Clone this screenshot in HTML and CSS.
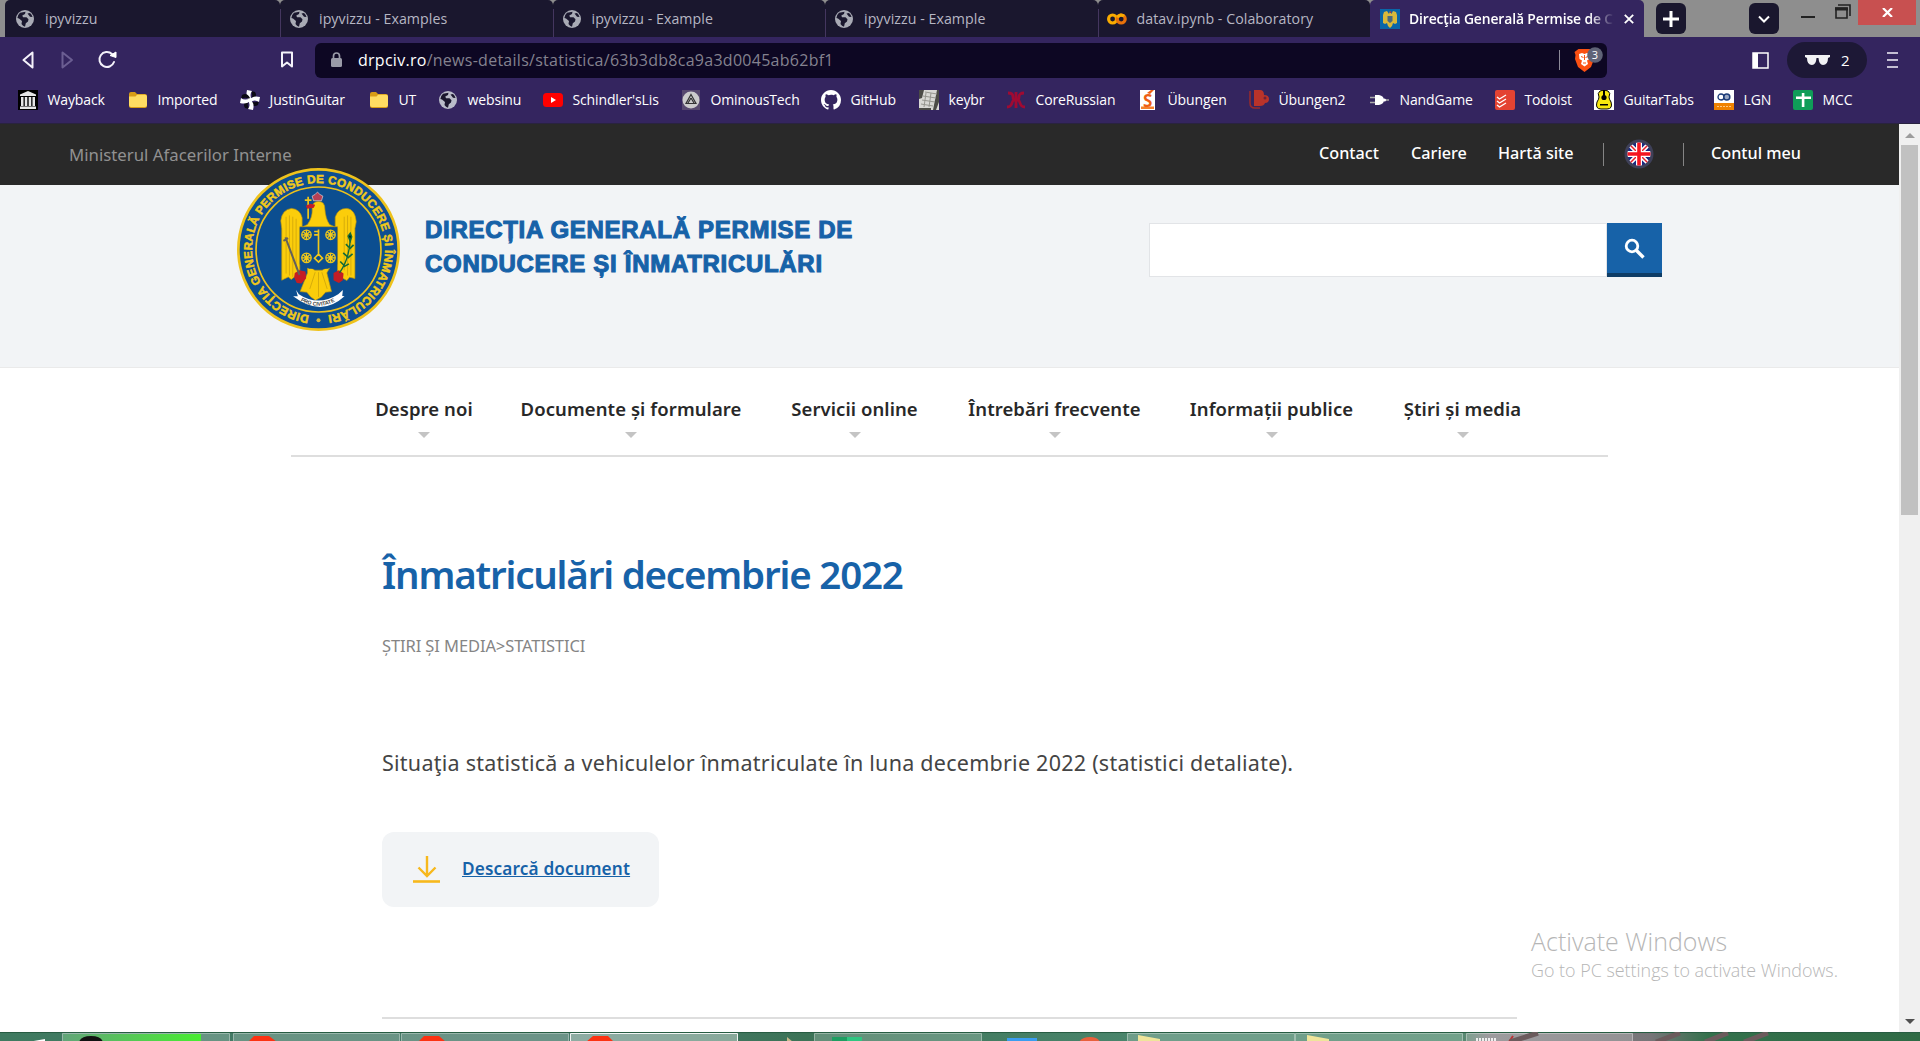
FILE: index.html
```html
<!DOCTYPE html>
<html lang="en">
<head>
<meta charset="utf-8">
<title>Direcţia Generală Permise de Conducere</title>
<link rel="stylesheet" href="styles.css">
</head>
<body>
<svg class="defs" width="0" height="0">
  <symbol id="globe" viewBox="0 0 20 20"><circle cx="10" cy="10" r="9" fill="currentColor"/><path class="land" d="M5 3.8 10.5 2.7 10 5 7.3 6.6 8 8.3 11.5 8.3 13.5 10.2 13 12.6 10.8 14.2 10 17.8A8 8 0 0 1 6.5 15L7 12 4 9.4 2.4 9A8 8 0 0 1 5 3.8ZM12.5 4.6 15 4A8 8 0 0 1 17.5 8L15 7.8Z"/></symbol>
  <symbol id="folder" viewBox="0 0 20 20"><path d="M1 4a2 2 0 0 1 2-2h4l2 2h8a2 2 0 0 1 2 2v10a2 2 0 0 1-2 2H3a2 2 0 0 1-2-2z" fill="#d99c16"/><path d="M1 6.5h6.5l1.6-1.7H17a2 2 0 0 1 2 2V15a2 2 0 0 1-2 2H3a2 2 0 0 1-2-2z" fill="#ffdc62"/></symbol>
</svg>

<header class="browser">
  <div class="tabs">
    <div class="tab"><svg class="fav"><use href="#globe"/></svg><span>ipyvizzu</span></div>
    <div class="tab"><svg class="fav"><use href="#globe"/></svg><span>ipyvizzu - Examples</span></div>
    <div class="tab"><svg class="fav"><use href="#globe"/></svg><span>ipyvizzu - Example</span></div>
    <div class="tab"><svg class="fav"><use href="#globe"/></svg><span>ipyvizzu - Example</span></div>
    <div class="tab"><svg class="fav" viewBox="0 0 20 20"><g fill="none" stroke-width="3.2"><circle cx="5.6" cy="10" r="4" stroke="#f9ab00"/><circle cx="14.2" cy="10" r="4" stroke="#e8710a"/><path d="M10.5 8.5a4 4 0 0 1 6.5-1.3" stroke="#f9ab00"/></g></svg><span>datav.ipynb - Colaboratory</span></div>
    <div class="tab active"><svg class="fav" viewBox="0 0 20 20"><path d="M0 0h20v20H0z" fill="#0a66a8"/><path d="M4 3 7 2l2 3 1-3 1.5 3L13 2l3 1 1 3v8l-2 1-2-1-1 3-2 2-2-2-1-3-2 1-2-1V6z" fill="#d9b93a"/><path d="M7.5 7h5v5l-2.5 2-2.5-2z" fill="#496a80"/><path d="m9 4 2-2 .5 2z" fill="#b33"/></svg><span>Direcţia Generală Permise de Conducere</span>
      <svg class="tab-close" viewBox="0 0 10 10"><path d="m.8.8 8.4 8.4M9.2.8.8 9.2" stroke="#fff" stroke-width="1.8"/></svg></div>
    <div class="tab-button"><svg width="16" height="16"><path d="M8 0v16M0 8h16" stroke="#fff" stroke-width="3"/></svg></div>
    <div class="tab-button list"><svg width="12" height="8"><path d="m1 1.5 5 5 5-5" fill="none" stroke="#fff" stroke-width="2"/></svg></div>
    <svg class="window-buttons" width="50" height="24"><path d="M0 17h14" stroke="#222" stroke-width="2"/><path d="M37 5h12v11M34 8h12v10H35V8" fill="none" stroke="#222" stroke-width="1.6"/><path d="M34 9h13" stroke="#222" stroke-width="3"/></svg>
    <div class="window-close"><svg width="11" height="9"><path d="m1 0 9 9M10 0 1 9" stroke="#fff" stroke-width="2.2"/></svg></div>
  </div>

  <div class="toolbar">
    <svg class="history" width="100" height="20" fill="none" stroke-linejoin="round"><path d="m11.500 2.500-9 7.500 9 7.500z" stroke="#f4f2fa" stroke-width="2"/><path d="m41.500 2.500 9.500 7.500-9.500 7.500z" stroke="#6b5e92" stroke-width="2"/><path d="M91 4a7.500 7.500 0 1 0 2 8" stroke="#f4f2fa" stroke-width="2" stroke-linecap="round"/><path d="M89 5.500 95 2v5.500z" fill="#fff" stroke="#fff"/></svg>
    <svg class="mark" width="14" height="18"><path d="M2 1.500h10v14l-5-4-5 4z" fill="none" stroke="#f4f2fa" stroke-width="2" stroke-linejoin="round"/></svg>
    <div class="address">
      <svg width="12" height="16"><rect y="6" width="11" height="9" rx="1.500" fill="#9a9ba8"/><path d="M2.500 7V4a3 3 0 0 1 6 0v3" fill="none" stroke="#9a9ba8" stroke-width="1.700"/></svg>
      <span class="url"><b>drpciv.ro</b>/news-details/statistica/63b3db8ca9a3d0045ab62bf1</span>
      <i class="rule"></i>
      <svg class="shield" width="30" height="26" viewBox="0 0 30 26"><path d="m4.500 2-4 3 1 3-.5 4 3 8 6.500 5 6.500-5 3-8-.5-4 1-3-4-3z" fill="#fb5012"/><path d="M5 7 8 6l2.500 1L13 6l3 1-.5 5-2.500 1.500 1 3.500-3.500 2.500L7 17l1-3.500L5.500 12z" fill="#fff"/><path d="m7 9.500 2.500 1M14 9.500l-2.500 1M10.500 8v5M9 16h3" stroke="#fb5012"/><circle cx="21" cy="8" r="7.800" fill="#5f6377"/><text x="21" y="11.800" text-anchor="middle" font-size="11" fill="#fff">3</text></svg>
    </div>
    <svg class="side" width="17" height="17"><path d="M1 1h15v15H1z" fill="none" stroke="#fff" stroke-width="1.500"/><path d="M1 1h5v15H1z" fill="#fff"/></svg>
    <div class="private"><svg width="25" height="11"><path d="M0 0h25v2l-2 1q0 7-5 7-4 0-4.500-7h-2Q11 10 7 10 2 10 2 3L0 2z" fill="#f2f2f5"/></svg><span>2</span></div>
    <svg class="menu" width="12" height="18"><path d="M0 2h11M0 9h11M0 16h11" stroke="#f4f2fa" stroke-width="1.700"/></svg>
  </div>

  <nav class="bookmarks">
    <a><svg viewBox="0 0 20 20"><path d="M0 0h20v20H0z" fill="#000"/><path d="M2 4.500 10 1l8 3.500V6H2zM2 16.500h16V19H2zM3 7h2.500v9H3zM6.800 7h2.500v9H6.800zM10.700 7h2.500v9h-2.500zM14.500 7H17v9h-2.500z" fill="#e6e6e6"/></svg>Wayback</a>
    <a><svg><use href="#folder"/></svg>Imported</a>
    <a><svg viewBox="0 0 20 20"><g id="blade"><path d="M10 10q4-3 1-9l4 1q3 5-3 8z" fill="#0c0a14"/><path d="M10 11Q5 7 7 0l5 1q-3 4 0 9z" fill="#fff"/></g><use href="#blade" transform="rotate(90 10 10)"/><use href="#blade" transform="rotate(180 10 10)"/><use href="#blade" transform="rotate(270 10 10)"/></svg>JustinGuitar</a>
    <a><svg><use href="#folder"/></svg>UT</a>
    <a class="light"><svg><use href="#globe"/></svg>websinu</a>
    <a><svg viewBox="0 0 20 20"><rect y="3" width="20" height="14" rx="3.500" fill="#f00"/><path d="m8 7 5 3-5 3z" fill="#fff"/></svg>Schindler'sLis</a>
    <a><svg viewBox="0 0 20 20"><path d="M1 0h18v20H1z" fill="#57496f"/><circle cx="10" cy="10" r="8.500" fill="#ccc"/><path d="m10 4.500 5 9H5zM10 8l-3 5M10 8l3 5" fill="none" stroke="#333" stroke-width="1.200"/></svg>OminousTech</a>
    <a><svg viewBox="0 0 16 16"><path fill="#fff" d="M8 0C3.580 0 0 3.580 0 8c0 3.540 2.290 6.530 5.470 7.590.4.070.55-.17.55-.38v-1.340c-2.230.48-2.690-1.070-2.690-1.070-.36-.92-.89-1.170-.89-1.170-.73-.5.05-.49.05-.49.81.06 1.230.83 1.230.83.72 1.230 1.880.87 2.340.67.07-.52.28-.87.51-1.070-1.780-.2-3.640-.89-3.640-3.950 0-.87.31-1.590.82-2.150-.08-.2-.36-1.020.08-2.120 0 0 .67-.21 2.200.82A7.700 7.700 0 0 1 8 3.870c.68 0 1.360.09 2 .27 1.530-1.040 2.200-.82 2.200-.82.44 1.100.16 1.920.08 2.120.51.56.82 1.270.82 2.150 0 3.070-1.870 3.750-3.650 3.950.29.25.54.73.54 1.480v2.190c0 .21.15.46.55.38A8 8 0 0 0 16 8c0-4.420-3.580-8-8-8z"/></svg>GitHub</a>
    <a><svg viewBox="0 0 20 20"><path d="M0 0h20v20H0z" fill="#d8d8d4"/><path d="M0 0h5L3 8 0 9zM18 0h2v12l-3 8h-3zM0 18h12v2H0z" fill="#4b4b46"/><path d="m4 6 13 2M3 10l13 2M2 14l12 2M7 3 5 17M12 3l-2 14M6 2l12 2" stroke="#96968f"/></svg>keybr</a>
    <a><svg viewBox="0 0 20 20"><path d="M10 2v16M2 3q5 0 5 4t3 3q3 1 3-3t5-4M1 17q4 0 5-4t4-3q3-1 4 3t5 4" fill="none" stroke="#a00a32" stroke-width="2.800"/></svg>CoreRussian</a>
    <a><svg class="langenscheidt" viewBox="0 0 20 20"><path d="M2 0h15v20H2z" fill="#fff"/><path d="M3 16.500h13V19H3z" fill="#f5802a"/><text x="9.500" y="16.500" text-anchor="middle" font-size="17" font-weight="700" fill="#ee5f12">S</text><path d="m9 3 4-3h3l-4 4z" fill="#ee5f12"/></svg>Übungen</a>
    <a><svg viewBox="0 0 20 20"><path d="M5 0h6q4 0 4 5 5 0 5 4t-4 4q-1 3-5 3H5z" fill="#b9332a"/><circle cx="16" cy="8" r="1.500" fill="#6e2138"/><path d="M1 1v12q0 5 5 5h5" fill="none" stroke="#9c2a2a" stroke-width="1.500"/></svg>Übungen2</a>
    <a><svg viewBox="0 0 20 20"><path d="M0 7.500h6M0 12.500h6M13 10h6" stroke="#aaa" stroke-width="1.300"/><path d="M5 5h4q5 1 5 5t-5 5H5z" fill="#fff"/><circle cx="14.500" cy="10" r="1.500" fill="#fff"/></svg>NandGame</a>
    <a><svg viewBox="0 0 20 20"><rect width="20" height="20" rx="2" fill="#e44332"/><path d="m2 7 2.500 2L11 5M2 11l2.500 2L11 9M2 15l2.500 2L11 13" fill="none" stroke="#fff" stroke-width="1.400"/></svg>Todoist</a>
    <a><svg viewBox="0 0 20 20"><path d="M0 0h20v20H0z" fill="#fff"/><path d="M6 1q4-2 8 0 3 2 1 6 0 2 2 5 2 7-4 7H7q-6 0-4-7 2-3 2-5Q3 3 6 1z" fill="#f8e70e" stroke="#000"/><circle cx="10" cy="7.500" r="2.600"/><path d="M9 0h2v7H9zM6 14h8v1.500H6z"/></svg>GuitarTabs</a>
    <a><svg viewBox="0 0 20 20"><path d="M0 0h20v13H0z" fill="#fff"/><path d="M0 13h20v7H0z" fill="#f08200"/><circle cx="7" cy="7" r="3" fill="none" stroke="#1c3c78" stroke-width="1.300"/><circle cx="12.800" cy="7" r="3" fill="#9aa9c4" stroke="#1c3c78" stroke-width="1.500"/><path d="M3 16.500h14" stroke="#ffc782" stroke-dasharray="2 1"/></svg>LGN</a>
    <a><svg viewBox="0 0 20 20"><rect width="20" height="20" rx="2" fill="#0f9d58"/><path d="M8.800 3h2.600v3.500H18v2.600h-6.600V17H8.800V9.100H3V6.500h5.800z" fill="#fff"/></svg>MCC</a>
  </nav>
</header>

<div class="view">
  <main class="page">
    <div class="topbar">
      <span class="ministry">Ministerul Afacerilor Interne</span>
      <nav class="top-links"><a>Contact</a><a>Cariere</a><a>Hartă site</a>
        <span class="flag"><svg width="30" height="30" viewBox="0 0 30 30"><circle cx="15" cy="15" r="14.500" fill="#3e4058"/><clipPath id="round"><circle cx="15" cy="15" r="11.500"/></clipPath><g clip-path="url(#round)"><path d="M3 3h24v24H3z" fill="#1b2a80"/><path d="m3 3 24 24M27 3 3 27" stroke="#fff" stroke-width="4.500"/><path d="m3 3 24 24M27 3 3 27" stroke="#e8202c" stroke-width="1.500"/><path d="M15 3v24M3 15h24" stroke="#fff" stroke-width="6"/><path d="M15 3v24M3 15h24" stroke="#f51420" stroke-width="3.600"/></g></svg></span>
        <a>Contul meu</a></nav>
    </div>

    <div class="masthead">
      <svg class="emblem" viewBox="51 38 488 488">
        <circle cx="295" cy="282" r="240" fill="#0d4f91" stroke="#eec21c" stroke-width="8"/>
        <circle cx="295" cy="282" r="187" fill="#0c4e90" stroke="#eec21c" stroke-width="5"/>
        <path id="ring" d="M295 481a199 199 0 0 1 0-398 199 199 0 0 1 0 398" fill="none"/>
        <text class="ring-text" font-size="35"><textPath href="#ring" startOffset="28" textLength="1194">DIRECȚIA GENERALĂ PERMISE DE CONDUCERE ȘI ÎNMATRICULĂRI</textPath></text>
        <circle cx="295" cy="494" r="6" fill="#d9b93a"/>
        <g fill="#fbcd0b" stroke="#b8930f" stroke-width="2">
          <path d="M276 160q0-22 19-22 19 0 19 22 2 30 14 47l17 8V185q8-26 34-26 26 2 29 40l-4 20v150l-16-4-8 10-14-8-6 8-8-26V214H239v132l-8 26-8-8-10 8-8-8-20 10V220l-3-24q4-34 32-37 26 2 32 28v28l16-8q16-22 14-47z"/>
          <path d="m262 330 22 14 22 0 26-14-12 22 14 56-18 2-12 14-18 10-14-10-12-14-20-2 22-56z"/>
        </g>
        <path d="M239 216h112v110l-28 14h-56l-28-14z" fill="#0c4e90"/>
        <path d="M208 180v180M198 184v170M218 184v180M228 190v150M372 184v160M382 180v180M392 184v176M285 350l-16 50M295 350v74M305 350l16 50" stroke="#c49c0c" stroke-width="2"/>
        <g fill="none" stroke="#f1c81a" stroke-width="4"><g id="wheel"><circle cx="259" cy="238" r="14"/><path d="M245 238h28M259 224v28M249 228l20 20M269 228l-20 20"/></g><use href="#wheel" x="72"/><use href="#wheel" y="69"/><use href="#wheel" x="72" y="69"/><path d="M295 222v74M282 228h13M282 238h13M295 296l12 12-12 12-12-12z" stroke-width="5"/><path d="M264 124v66M254 134h20" stroke-width="5"/></g>
        <path d="m280 136-4-14 9-5 7-7 7 7 9 5-4 14z" fill="#b84054" stroke="#ddd" stroke-width="2"/>
        <path d="m257 151 14-6 14 3-4 9-20 3zM224 352l14-8 18 4 2 20-14 16-14-2-8-16zM340 352l16-8 14 10-2 20-12 8-16-8z" fill="#c41d25"/>
        <path d="m196 246 42 112M190 256l14-8" stroke="#63615c" stroke-width="6"/>
        <path d="M358 352q34-50 32-114" fill="none" stroke="#126b3a" stroke-width="4"/><path d="m390 256-6-14 6-8 4 10zM387 276l-10-10M388 280l12-12M382 304l-13-12M382 308l15-13M372 330l-12-12M370 334l16-9" stroke="#126b3a" stroke-width="5"/>
        <path d="m228 403 8 13q58 38 118 0l14-13-2 18 7 1q-70 64-154 0l14 0z" fill="#fff"/>
        <path id="motto" d="M241 435q54 32 112-2" fill="none"/><text font-size="16" font-weight="700" fill="#444"><textPath href="#motto" textLength="108">PRO CIVITATE</textPath></text>
      </svg>
      <h2 class="name">DIRECȚIA GENERALĂ PERMISE DE<br>CONDUCERE ȘI ÎNMATRICULĂRI</h2>
      <div class="search"><div class="field"></div><div class="go"><svg width="22" height="22"><circle cx="8" cy="8" r="5.800" fill="none" stroke="#fff" stroke-width="2.800"/><path d="m12.500 12.500 7 7" stroke="#fff" stroke-width="3.400"/></svg></div></div>
    </div>

    <nav class="main-nav"><a>Despre noi</a><a>Documente și formulare</a><a>Servicii online</a><a>Întrebări frecvente</a><a>Informații publice</a><a>Știri și media</a></nav>

    <article class="content">
      <h1>Înmatriculări decembrie 2022</h1>
      <p class="crumbs">ȘTIRI ȘI MEDIA&gt;STATISTICI</p>
      <p class="summary">Situaţia statistică a vehiculelor înmatriculate în luna decembrie 2022 (statistici detaliate).</p>
      <a class="download"><svg width="28" height="28"><path d="M14 0v19M5.500 11.500l8.500 8.500 8.500-8.500" fill="none" stroke="#f7b81c" stroke-width="2.400"/><path d="M0 25.500h27" stroke="#f7b81c" stroke-width="2.600"/></svg><span>Descarcă document</span></a>
    </article>
    <aside class="activation"><p>Activate Windows</p><p>Go to PC settings to activate Windows.</p></aside>
  </main>
  <div class="scrollbar"><i class="up"></i><i class="thumb"></i><i class="down"></i></div>
</div>

<footer class="taskbar">
  <svg width="1920" height="10">
    <defs><linearGradient id="progress"><stop offset="0" stop-color="#62a579"/><stop offset="1" stop-color="#47ed31"/></linearGradient>
    <linearGradient id="desk"><stop offset="0" stop-color="#3f7a60"/><stop offset=".3" stop-color="#47796a"/><stop offset=".42" stop-color="#3c7357"/><stop offset=".6" stop-color="#4b866d"/><stop offset=".76" stop-color="#4f8a6d"/><stop offset=".775" stop-color="#858386"/><stop offset=".86" stop-color="#777578"/><stop offset=".89" stop-color="#33714c"/><stop offset="1" stop-color="#2f6a45"/></linearGradient></defs>
    <path d="M0 0h1920v10H0z" fill="url(#desk)"/><path d="M0 .5h1920" stroke="#275c42"/>
    <path d="m28 10 17-3v3z" fill="#fff"/>
    <g fill="#fff" fill-opacity=".2" stroke="#fff" stroke-opacity=".4"><path d="M62.500 12V1.500h167V12zM233.500 12V1.500h166V12zM401.500 12V1.500h167V12zM814.500 12V1.500h167V12zM1127.500 12V1.500h167V12zM1295.500 12V1.500h167V12zM1466.500 12V1.500h166V12z"/><path d="M570.500 12V1.500h167V12z" fill-opacity=".38" stroke-opacity=".9"/></g>
    <path d="M63 2h138v8H63z" fill="url(#progress)"/>
    <path d="M79 10q2-6 12-6t12 6z" fill="#111"/>
    <path d="m248 10 6-6h15l8 6zM418 10l6-6h15l7 6zM586 10l7-6h15l6 6z" fill="#fb3312"/>
    <path d="m787 5 6 5h-6z" fill="#c8b98a"/><path d="M832 5h15v5h-15z" fill="#1f9e62"/><path d="M847 5h15v5h-15z" fill="#2fc681"/>
    <path d="M1007 6h30v4h-30z" fill="#3a9df0"/><path d="M1079 10q3-5 11-5t10 5z" fill="#e8603c"/>
    <path d="m1138 3 22 4v3h-22zM1307 3l22 4v3h-22z" fill="#efe59a"/>
    <path d="M1476 8h20" stroke="#eee" stroke-width="4" stroke-dasharray="2 1"/><path d="m1513 4-4 6" stroke="#b33" stroke-width="2"/>
    <path d="m1538 1-28 9M1680 1l-24 9M1728 1l-23 9M1768 1l-24 9" stroke="#6b5b5c" stroke-width="5"/>
  </svg>
</footer>
</body>
</html>
```
FILE: styles.css
```css
* { box-sizing: border-box; }
body { margin: 0; width: 1920px; height: 1041px; overflow: hidden; display: flex; flex-direction: column; background: #fff; font-family: "Open Sans", "Noto Sans", sans-serif; }
h1, h2, p { margin: 0; }
svg { display: block; flex: none; }
.defs { position: absolute; }

/* browser frame */
.browser { height: 124px; flex: none; background: #34255f; border-bottom: 1px solid #292340; }
.tabs { height: 37px; display: flex; padding-left: 5px; background: #8e8e8e; }
.tab { width: 273px; height: 37px; flex: none; display: flex; align-items: center; gap: 10px; padding: 0 0 0 10px; background: #1a172e; color: #b6b6c3; font-size: 14.200px; letter-spacing: .05px; white-space: nowrap; border-radius: 5px 5px 0 0; }
.tab:first-child { width: 275px; }
.tab + .tab { background: linear-gradient(#44365f, #44365f) 0 9px / 1px 28px no-repeat #1a172e; }
.tab + .tab:not(.active) { width: 272.500px; padding-left: 9px; }
.fav { width: 20px; height: 20px; color: #a9abb5; }
.land { fill: #1a172e; }
.tab + .tab.active { width: 274px; background: #34255f; color: #fff; font-weight: 600; font-size: 13.900px; gap: 9px; }
.active span { width: 205px; overflow: hidden; letter-spacing: -.12px; -webkit-mask-image: linear-gradient(90deg, #000 88%, transparent); }
.tab-close { width: 10px; height: 10px; margin-left: 1px; }
.tab-button { width: 30px; height: 31px; flex: none; margin: 3px 0 0 12px; border-radius: 6px; background: #1a172e; display: grid; place-items: center; }
.tab-button.list { margin-left: 63px; }
.window-buttons { margin-left: 22px; }
.window-close { width: 58px; height: 25px; flex: none; margin-left: 7px; background: #c85050; display: grid; place-items: center; }

.toolbar { height: 46px; display: flex; align-items: center; padding-left: 21px; }
.mark { margin-left: 159px; }
.address { width: 1292px; height: 35px; flex: none; margin-left: 21px; padding-left: 16px; display: flex; align-items: center; border-radius: 6px; background: #0d0723; }
.url { width: 1201px; margin: -1px 0 0 15px; color: #84828f; font-size: 16px; letter-spacing: .27px; }
.url b { color: #fff; font-weight: 400; }
.rule { width: 1px; height: 20px; background: #8c8a98; }
.shield { margin-left: 14px; }
.side { margin-left: 145px; }
.private { width: 80px; height: 36px; flex: none; margin-left: 18px; padding-left: 18px; border-radius: 18px; background: #1d1836; color: #fff; display: flex; align-items: center; gap: 11px; font-size: 15px; }
.menu { margin-left: 20px; }

.bookmarks { display: grid; grid-template-columns: 110px 112px 129px 69px 105px 138px 140px 98px 87px 132px 111px 121px 125px 99px 120px 79px 80px; height: 33px; padding-left: 18px; align-items: center; }
.bookmarks a { display: flex; align-items: center; gap: 9.500px; color: #fff; font-size: 14px; line-height: 18px; letter-spacing: -.13px; white-space: nowrap; }
.bookmarks svg { width: 20px; height: 20px; }
.langenscheidt { overflow: visible; }
.light svg { color: #b9bcc9; }

/* site */
.view { height: 908px; flex: none; display: flex; }
.page { width: 1899px; display: flex; flex-direction: column; position: relative; font-family: "Noto Sans", "Open Sans", sans-serif; }
.topbar { height: 61px; flex: none; display: flex; align-items: center; background: #292929; }
.ministry { width: 1250px; margin-top: -1px; padding-left: 69px; color: #919191; font-size: 16.800px; }
.top-links { display: grid; grid-template-columns: 92px 87px 105px 80px 120px; margin: -1px 0 0 69px; align-items: center; color: #fff; font-size: 16.200px; font-weight: 500; white-space: nowrap; }
.top-links a { margin-top: -2px; }
.flag { width: 81px; height: 23px; padding-left: 20px; display: flex; align-items: center; border: solid #858585; border-width: 0 1px; }
.top-links a:last-child { padding-left: 28px; }
.masthead { height: 183px; flex: none; display: flex; align-items: flex-start; background: #f2f4f6; border-bottom: 1px solid #eaeaea; padding-left: 237px; }
.emblem { width: 163px; height: 163px; margin-top: -17.500px; position: relative; font-family: "Liberation Sans", sans-serif; }
.ring-text { fill: #f1c81a; font-weight: 700; stroke: #f1c81a; stroke-width: 1.500px; }
.name { width: 724px; margin: 28px 0 0 25px; color: #1762a8; font: 700 24px/34px "Liberation Sans", Arial, sans-serif; letter-spacing: .7px; -webkit-text-stroke: 1.100px #1762a8; white-space: nowrap; }
.search { display: flex; margin-top: 38px; }
.field { width: 458px; height: 54px; background: #fff; border: 1px solid #e2e4e7; }
.go { width: 55px; height: 54px; padding-top: 2px; display: grid; place-items: center; background: #1762a8; border-bottom: 4px solid #0f3d66; }
.main-nav { width: 1317px; height: 89px; flex: none; margin-left: 291px; padding: 27px 0 0 85px; display: grid; grid-template-columns: 96px 218px 129px 171px 163px 119px; column-gap: 50px; border-bottom: 2px solid #dedede; color: #282828; font-size: 18.500px; line-height: 27px; font-weight: 600; letter-spacing: .08px; white-space: nowrap; }
.main-nav a { display: flex; flex-direction: column; align-items: center; }
.main-nav a::after { content: ""; margin-top: 10px; border: solid transparent; border-width: 6px 6.500px 0; border-top-color: #c4c4c4; }
.content { width: 1135px; height: 562px; margin-left: 382px; display: flex; flex-direction: column; align-items: flex-start; border-bottom: 2px solid #dedede; white-space: nowrap; }
h1 { margin-top: 89px; color: #1762a8; font-size: 38.500px; line-height: 56px; font-weight: 560; letter-spacing: -1.200px; }
.crumbs { margin-top: 31.500px; color: #858585; font-size: 16.500px; line-height: 24px; letter-spacing: -.1px; }
.summary { margin-top: 87.500px; color: #444; font-size: 21.500px; line-height: 36px; letter-spacing: .25px; }
.download { width: 277px; height: 75px; margin-top: 51px; padding-left: 31px; display: flex; align-items: center; gap: 21px; border-radius: 12px; background: #f2f4f6; color: #1762a8; font-size: 17.200px; font-weight: 560; letter-spacing: .15px; text-decoration: underline; }
.download span { margin-top: -2px; }
.activation { position: absolute; left: 1531px; top: 800px; font-family: "Open Sans", sans-serif; color: #b6b6b6; font-weight: 300; white-space: nowrap; }
.activation p:first-child { font-size: 25px; line-height: 34px; }
.activation p:last-child { font-size: 17.900px; line-height: 24px; }
.scrollbar { width: 21px; display: flex; flex-direction: column; align-items: center; background: #f0f0f0; }
.up { margin-top: 9px; border: solid transparent; border-width: 0 5px 5px; border-bottom-color: #9c9c9c; }
.thumb { width: 17px; height: 370px; margin-top: 7px; background: #c1c1c1; }
.down { margin: auto 0 8px; border: solid transparent; border-width: 5px 5px 0; border-top-color: #505050; }
.taskbar { height: 9px; overflow: hidden; }
```
